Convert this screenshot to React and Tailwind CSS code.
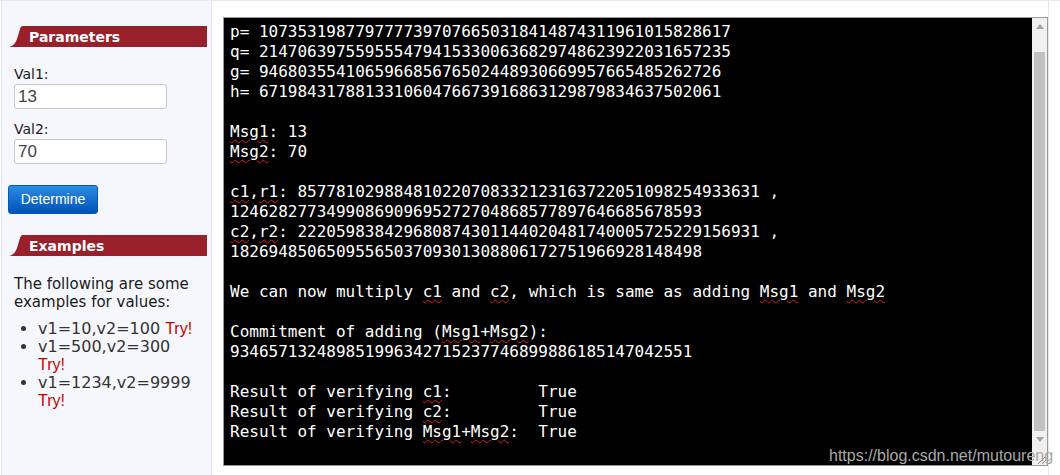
import React from "react";

const S = ({ children }) => (
  <span className="underline decoration-wavy decoration-[#e01b1b] decoration-1 underline-offset-[2px]">
    {children}
  </span>
);

function Header({ title }) {
  return (
    <div className="flex h-[21px]">
      <svg width="15" height="21" viewBox="0 0 15 21" className="block shrink-0">
        <path d="M0 21 C3 21 7 19 9 13 L12 3 C12.6 1 13.5 0 15 0 L15 21 Z" fill="#97202b" />
      </svg>
      <div className="flex-1 bg-[#97202b] pl-[6px] flex items-center text-white font-bold text-[14px] leading-none [font-family:'DejaVu_Sans',Verdana,sans-serif]">
        {title}
      </div>
    </div>
  );
}

function Field({ label, value }) {
  return (
    <div className="pl-[6px]">
      <div className="text-[14px] leading-[17px] text-[#1a1a1a]">{label}</div>
      <input
        readOnly
        value={value}
        className="mt-[1px] block w-[153px] h-[25px] border border-[#c8c8c8] rounded-[3px] bg-white px-[3px] text-[17px] text-[#444] [font-family:'Liberation_Sans',Arial,sans-serif] outline-none"
      />
    </div>
  );
}

export default function App() {
  return (
    <div className="relative flex w-[1060px] h-[475px] bg-white overflow-hidden border-t border-[#e9e9e9] [font-family:'DejaVu_Sans',Verdana,sans-serif]">
      {/* Sidebar */}
      <aside className="ml-[1px] w-[211px] shrink-0 bg-[#f6f7fc] border-r border-l border-[#e2e6f0] pl-[6px] pr-[4px] pt-[25px]">
        <Header title="Parameters" />
        <div className="mt-[19px]">
          <Field label="Val1:" value="13" />
        </div>
        <div className="mt-[12px]">
          <Field label="Val2:" value="70" />
        </div>
        <button className="mt-[21px] block w-[90px] h-[29px] rounded-[3px] border border-[#0b55b0] bg-gradient-to-b from-[#2b8de3] to-[#0152b9] text-white text-[14px] [font-family:'Liberation_Sans',Arial,sans-serif]">
          Determine
        </button>
        <div className="mt-[21px]">
          <Header title="Examples" />
        </div>
        <p className="mt-[19px] pl-[6px] pr-[4px] text-[15px] leading-[18px] text-[#1a1a1a]">
          The following are some examples for values:
        </p>
        <ul className="mt-[9px] pl-[30px] pr-[6px] list-disc text-[16px] leading-[18px] text-[#333] marker:text-[#333]">
          <li>
            v1=10,v2=100{" "}
            <span className="text-[#cc0000] [font-family:'Liberation_Sans',Arial,sans-serif]">Try!</span>
          </li>
          <li>
            v1=500,v2=300{" "}
            <span className="text-[#cc0000] [font-family:'Liberation_Sans',Arial,sans-serif]">Try!</span>
          </li>
          <li>
            v1=1234,v2=9999{" "}
            <span className="text-[#cc0000] [font-family:'Liberation_Sans',Arial,sans-serif]">Try!</span>
          </li>
        </ul>
      </aside>

      {/* Main */}
      <main className="flex-1 flex">
        <div className="w-[837px] border-r border-[#e6e6e6] pl-[11px] pt-[16px]">
          <div className="flex w-[825px] h-[449px] border border-[#9a9a9a] bg-black">
            <pre className="flex-1 m-0 pl-[6px] pt-[4px] text-white text-[16px] leading-[20px] overflow-hidden [font-family:'DejaVu_Sans_Mono',Consolas,monospace]">
{`p= 1073531987797777397076650318414874311961015828617
q= 2147063975595554794153300636829748623922031657235
g= 946803554106596685676502448930669957665485262726
h= 671984317881331060476673916863129879834637502061

`}<S>Msg1</S>{`: 13
`}<S>Msg2</S>{`: 70

`}<S>c1</S>,<S>r1</S>{`: 857781029884810220708332123163722051098254933631 ,
1246282773499086909695272704868577897646685678593
`}<S>c2</S>,<S>r2</S>{`: 222059838429680874301144020481740005725229156931 ,
1826948506509556503709301308806172751966928148498

We can now multiply `}<S>c1</S>{` and `}<S>c2</S>{`, which is same as adding `}<S>Msg1</S>{` and `}<S>Msg2</S>{`

Commitment of adding (`}<S>Msg1</S>+<S>Msg2</S>{`):
934657132489851996342715237746899886185147042551

Result of verifying `}<S>c1</S>{`:         True
Result of verifying `}<S>c2</S>{`:         True
Result of verifying `}<S>Msg1</S>+<S>Msg2</S>{`:  True`}
            </pre>
            {/* scrollbar */}
            <div className="w-[15px] flex flex-col bg-[#f0f0f0]">
              <div className="h-[17px] flex items-center justify-center">
                <svg width="8" height="5" viewBox="0 0 8 5"><path d="M0 5 L4 0 L8 5 Z" fill="#a3a3a3" /></svg>
              </div>
              <div className="flex-1 flex flex-col pt-[17px] px-[2px]">
                <div className="flex-1 bg-[#c1c1c1]" />
              </div>
              <div className="h-[17px] flex items-center justify-center">
                <svg width="8" height="5" viewBox="0 0 8 5"><path d="M0 0 L8 0 L4 5 Z" fill="#a3a3a3" /></svg>
              </div>
              <div className="h-[17px] flex items-end justify-end bg-[#f0f0f0]">
                <svg width="12" height="12" viewBox="0 0 12 12">
                  <path d="M11 3 L3 11 M11 7 L7 11" stroke="#8a8a8a" strokeWidth="1" />
                </svg>
              </div>
            </div>
          </div>
        </div>
      </main>

      {/* watermark */}
      <div className="absolute left-[829px] top-[444px] text-[16px] leading-[22px] text-[#a9a9a9] whitespace-nowrap [font-family:'Liberation_Sans',Arial,sans-serif]">
        https://blog.csdn.net/mutoureng
      </div>
    </div>
  );
}
